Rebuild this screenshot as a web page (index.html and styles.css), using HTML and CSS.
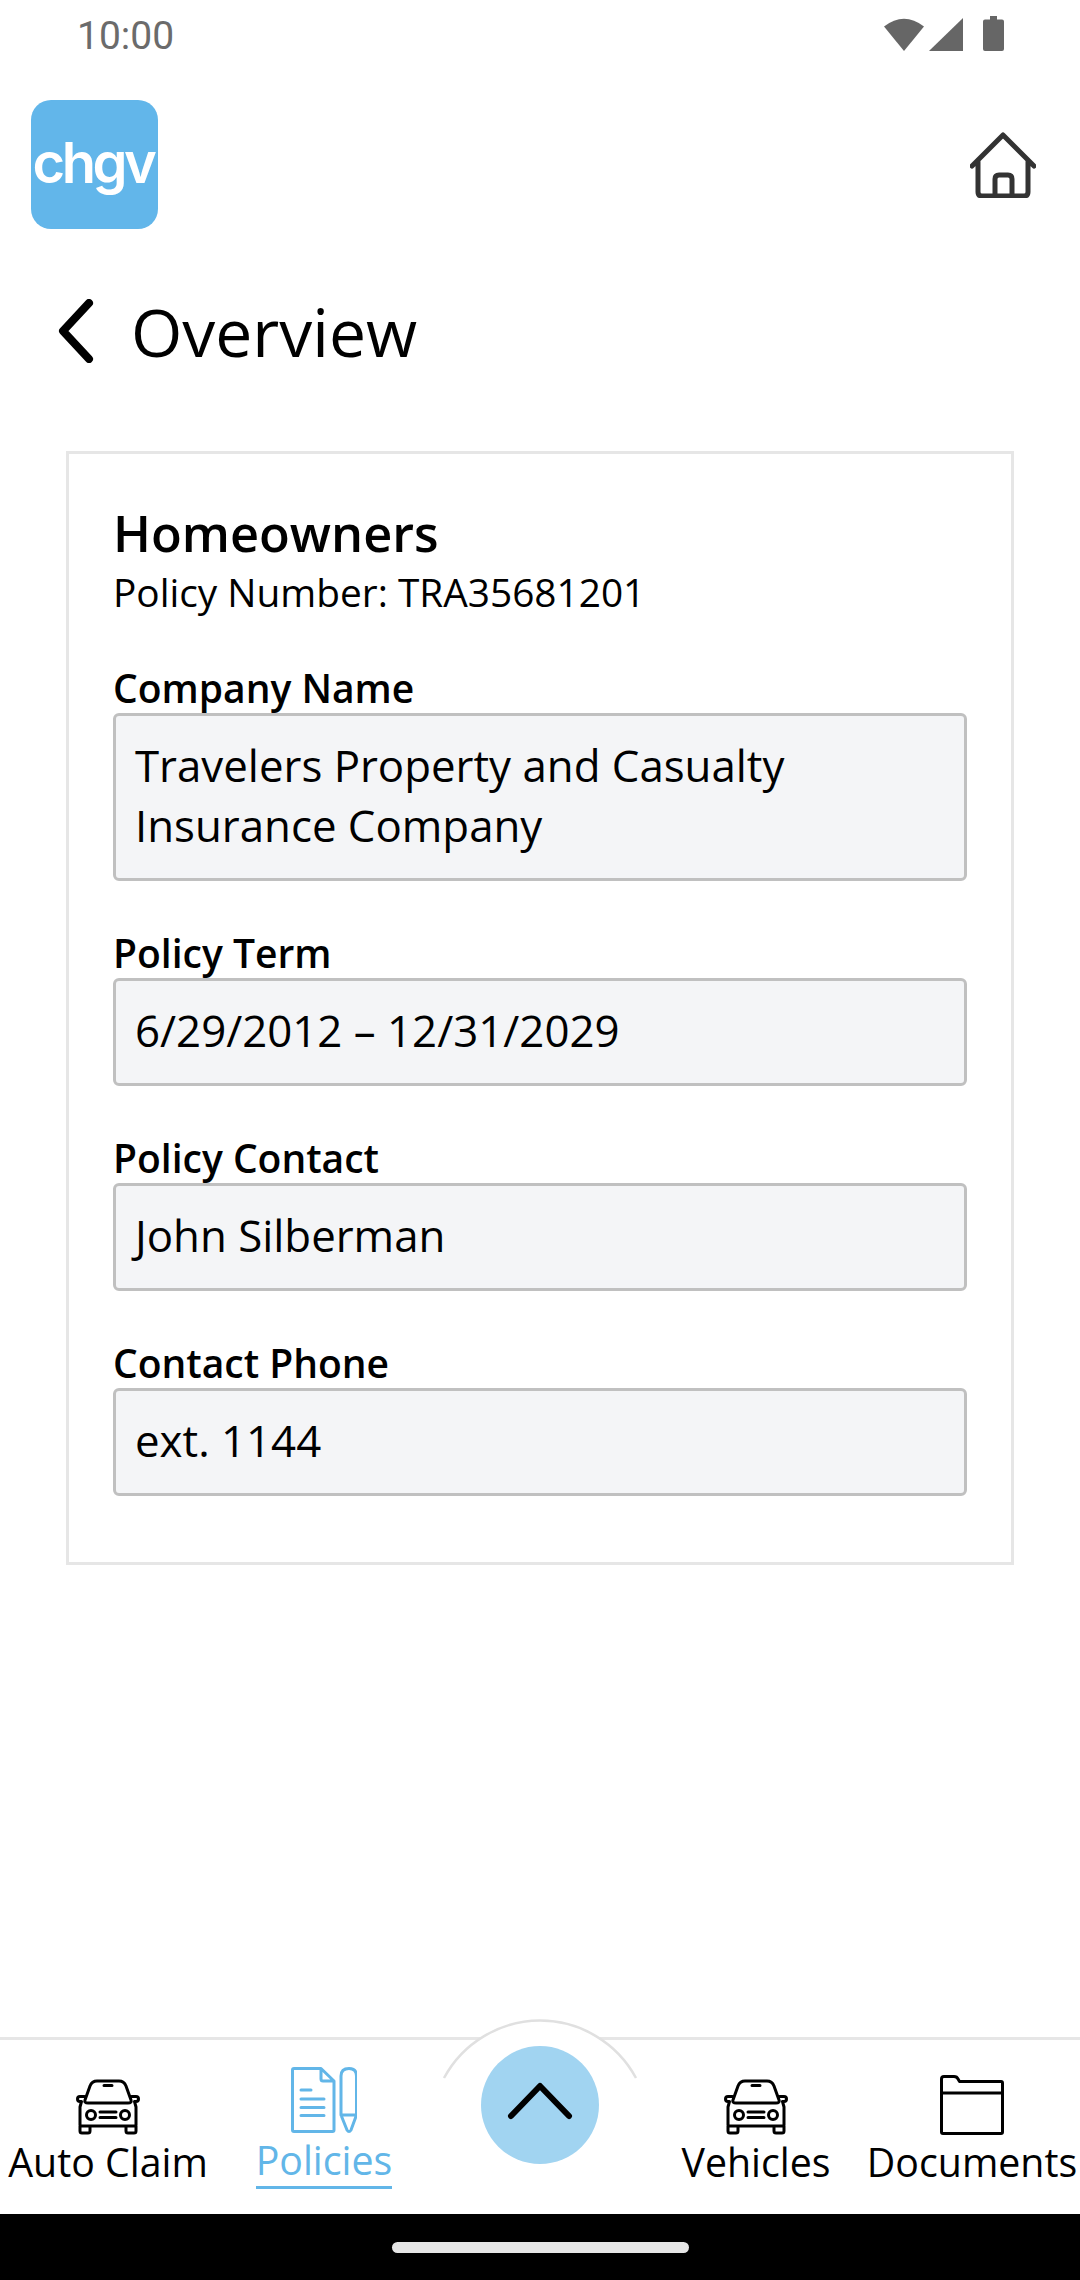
FILE: index.html
```html
<!DOCTYPE html>
<html lang="en">
<head>
<meta charset="utf-8">
<title>Overview</title>
<link rel="stylesheet" href="styles.css">
</head>
<body>
<div class="app">
  <div class="status">
    <span class="time">10:00</span>
    <div class="status-icons">
      <svg class="ic-wifi" viewBox="0 0 40 34"><path d="M0 9.5 Q20 -6 40 9.5 L20 34Z"/></svg>
      <svg class="ic-signal" viewBox="0 0 34 33"><path d="M34 0V33H0Z"/></svg>
      <svg class="ic-batt" viewBox="0 0 21 35"><path d="M7 0H14V3.5H19Q21 3.5 21 5.5V33Q21 35 19 35H2Q0 35 0 33V5.500Q0 3.500 2 3.500H7Z"/></svg>
    </div>
  </div>
  <header class="header">
    <div class="logo"><span>chgv</span></div>
    <svg class="home" viewBox="0 0 66 66"><path d="M2 34 L33 3 L64 34M8 28V60Q8 64 12 64H54Q58 64 58 60V28M25 64V47Q25 43 29 43H38Q42 43 42 47V64"/></svg>
  </header>
  <div class="title-row">
    <svg class="back" viewBox="0 0 36 64"><path d="M31 4 L5 32 L31 60"/></svg>
    <h1 class="title">Overview</h1>
  </div>
  <section class="card">
    <h2 class="card-title">Homeowners</h2>
    <p class="policy-no">Policy Number: TRA35681201</p>
    <div class="group">
      <div class="label">Company Name</div>
      <div class="field">Travelers Property and Casualty Insurance Company</div>
    </div>
    <div class="group">
      <div class="label">Policy Term</div>
      <div class="field">6/29/2012 – 12/31/2029</div>
    </div>
    <div class="group">
      <div class="label">Policy Contact</div>
      <div class="field">John Silberman</div>
    </div>
    <div class="group">
      <div class="label">Contact Phone</div>
      <div class="field">ext. 1144</div>
    </div>
  </section>
  <div class="spacer"></div>
  <nav class="nav">
    <div class="nav-item">
      <div class="nav-icon">
        <svg class="ic-car" viewBox="0 0 64 56"><path d="M9 21L14 7Q16 2 21 2H43Q48 2 50 7L55 21Q56 24 52 24H12Q8 24 9 21ZM28 6.500H36M8.500 17.500H4a2.500 2.500 0 0 0 0 5H5.500L4 28V46Q4 47 5 47H59Q60 47 60 46V28L58.500 22.500H60a2.500 2.500 0 0 0 0-5H55.500M4 47V52Q4 54 6 54H12Q14 54 14 52V47M50 47V52Q50 54 52 54H58Q60 54 60 52V47M24 33H40M24 38.500H40"/><circle cx="15" cy="36" r="4.500"/><circle cx="49" cy="36" r="4.500"/></svg>
      </div>
      <span class="nav-label">Auto Claim</span>
    </div>
    <div class="nav-item active">
      <div class="nav-icon">
        <svg class="ic-policy" viewBox="0 0 66 66"><path d="M1.500 3Q1.500 1.500 3 1.500H30L43 14V63Q43 64.500 41.500 64.500H3Q1.500 64.500 1.500 63ZM30 1.500V12Q30 14 32 14H43M10 23H20M10 32H33M10 40.500H33M10 48.500H33M50 48V9Q50 1.500 58 1.500Q65.500 1.500 65.500 9V48L60 63Q58 66 56 63ZM50 48H65.500"/></svg>
      </div>
      <span class="nav-label">Policies</span>
    </div>
    <div class="nav-item nav-gap"></div>
    <div class="nav-item">
      <div class="nav-icon">
        <svg class="ic-car" viewBox="0 0 64 56"><path d="M9 21L14 7Q16 2 21 2H43Q48 2 50 7L55 21Q56 24 52 24H12Q8 24 9 21ZM28 6.500H36M8.500 17.500H4a2.500 2.500 0 0 0 0 5H5.500L4 28V46Q4 47 5 47H59Q60 47 60 46V28L58.500 22.500H60a2.500 2.500 0 0 0 0-5H55.500M4 47V52Q4 54 6 54H12Q14 54 14 52V47M50 47V52Q50 54 52 54H58Q60 54 60 52V47M24 33H40M24 38.500H40"/><circle cx="15" cy="36" r="4.500"/><circle cx="49" cy="36" r="4.500"/></svg>
      </div>
      <span class="nav-label">Vehicles</span>
    </div>
    <div class="nav-item">
      <div class="nav-icon">
        <svg class="ic-folder" viewBox="0 0 64 60"><path d="M1.500 16V4Q1.500 1.500 4 1.500H14Q17 1.500 18 4L19.500 6.500H61Q62.500 6.500 62.500 8V57Q62.500 58.500 61 58.500H3Q1.500 58.500 1.500 57ZM1.500 18H62.500"/></svg>
      </div>
      <span class="nav-label">Documents</span>
    </div>
    <svg class="fab" viewBox="0 0 200 150">
      <path class="fab-arc" d="M4 59A109 109 0 0 1 196 59"/>
      <circle class="fab-disc" cx="100" cy="86" r="59"/>
      <path class="fab-chev" d="M71 97L100 67L129 97"/>
    </svg>
  </nav>
  <div class="sysbar"><div class="pill"></div></div>
</div>
</body>
</html>
```

FILE: styles.css
```css
* { box-sizing: border-box; }
html, body { margin: 0; padding: 0; background: #fff; }
body { font-family: "Open Sans", "Liberation Sans", sans-serif; color: #000; }
.app { width: 1080px; height: 2280px; display: flex; flex-direction: column; overflow: hidden; }

.status { height: 60px; display: flex; justify-content: space-between; align-items: flex-start; padding: 13px 76px 0 77px; }
.time { font-family: Roboto, sans-serif; font-size: 39px; line-height: 46px; color: #6b6b6b; }
.status-icons { display: flex; align-items: flex-start; padding-top: 3px; }
.status-icons svg { display: block; fill: #666; }
.ic-wifi { width: 40px; height: 34px; margin-top: 1px; }
.ic-signal { width: 34px; height: 33px; margin: 2px 20px 0 5px; }
.ic-batt { width: 21px; height: 35px; }

.header { display: flex; justify-content: space-between; align-items: center; margin-top: 40px; padding: 0 44px 0 31px; }
.logo { width: 127px; height: 129px; border-radius: 20px; background: #62b6ea; display: flex; align-items: center; justify-content: center; }
.logo span { font-family: Inter, sans-serif; font-weight: 600; font-size: 56px; line-height: 56px; letter-spacing: -3.5px; color: #fff; margin: -3px 0 0 -3px; }
.home { width: 66px; height: 66px; fill: none; stroke: #333; stroke-width: 5; stroke-linecap: round; stroke-linejoin: round; }

.title-row { display: flex; align-items: center; height: 80px; margin-top: 62px; padding-left: 58px; }
.back { width: 36px; height: 64px; fill: none; stroke: #000; stroke-width: 8; stroke-linecap: round; stroke-linejoin: round; }
.title { margin: 0 0 0 37px; font-size: 66px; line-height: 80px; font-weight: 400; }

.card { margin: 80px 0 0 66px; width: 948px; border: 3px solid #e6e6e6; padding: 49px 44px 66px; }
.card-title { margin: 0; font-size: 50.5px; line-height: 60px; font-weight: 600; }
.policy-no { margin: 5px 0 0; font-size: 38.8px; line-height: 48px; }
.group { margin-top: 47px; }
.label { font-size: 39px; line-height: 50px; font-weight: 600; }
.field { background: #f4f5f7; border: 3px solid #c0c0c0; border-radius: 6px; padding: 19px 18px 23px 19px; font-size: 43.8px; line-height: 60px; }

.spacer { flex: 1; }

.nav { position: relative; height: 177px; border-top: 3px solid #e6e6e6; padding-top: 20px; display: grid; grid-template-columns: repeat(5, 1fr); align-items: start; }
.nav-item { display: flex; flex-direction: column; align-items: center; }
.nav-icon { height: 75px; display: flex; align-items: flex-end; margin-bottom: 1.5px; }
.nav-icon svg { display: block; fill: none; stroke: #000; stroke-width: 3; stroke-linecap: round; stroke-linejoin: round; }
.ic-car { width: 64px; height: 56px; }
.ic-folder { width: 64px; height: 60px; }
.ic-policy { width: 66px; height: 66px; }
.nav-label { font-size: 39.3px; line-height: 50px; white-space: nowrap; }
.active { color: #62b6e8; margin-top: -2px; }
.active .nav-icon { margin-bottom: 0; }
.active .nav-icon svg { stroke: #62b6e8; }
.active .nav-label { margin-top: 2px; padding: 0 0 1px; border-bottom: 3px solid #62b6e8; }
.fab { position: absolute; left: 440px; top: -21px; width: 200px; height: 150px; }
.fab-arc { fill: #fff; stroke: #e0e0e0; stroke-width: 2.500; }
.fab-disc { fill: #a1d4f1; }
.fab-chev { fill: none; stroke: #000; stroke-width: 6; stroke-linecap: round; stroke-linejoin: round; }

.sysbar { height: 66px; background: #000; display: flex; align-items: center; justify-content: center; }
.pill { width: 297px; height: 11px; border-radius: 6px; background: #e6e6e6; }
```
